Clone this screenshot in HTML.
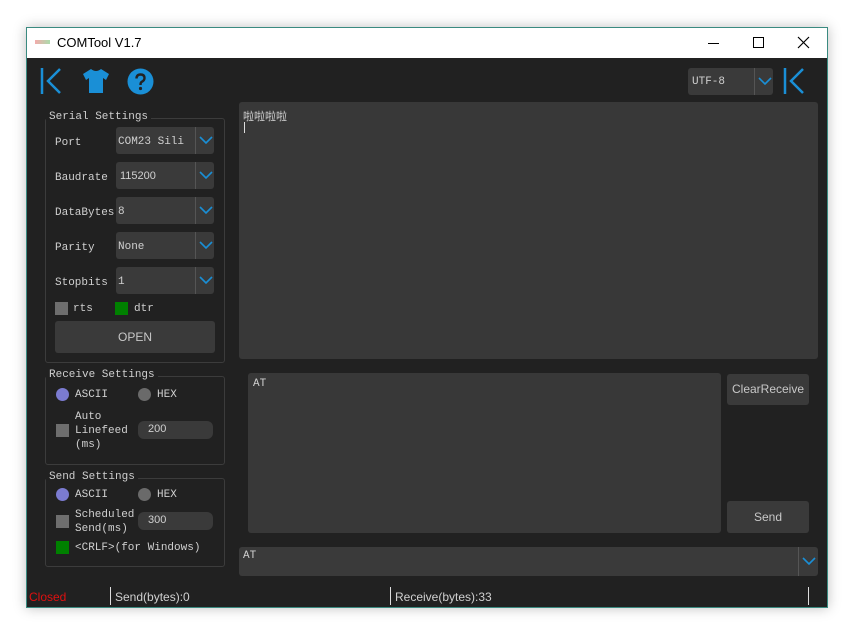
<!DOCTYPE html>
<html><head><style>
*{margin:0;padding:0;box-sizing:border-box}
body{width:862px;height:637px;background:#fff;position:relative;overflow:hidden;font-family:"Liberation Mono","Noto Sans CJK SC",monospace;font-size:11px;color:#d0d0d0}
.a{position:absolute}
.win{left:26px;top:27px;width:802px;height:581px;border:1px solid #3a8a80;background:#212121;box-shadow:0 0 12px rgba(0,0,0,.25)}
.title{left:27px;top:28px;width:800px;height:30px;background:#fff;color:#000;font-family:"Liberation Sans",sans-serif;font-size:13px}
.grp{border:1px solid #3c3c3c;border-radius:3px}
.gt{background:#212121;padding:0 3px;color:#cfcfcf;font-size:11px}
.cb{background:#3a3a3a;border-radius:3px}
.cb .arr{position:absolute;right:0;top:0;bottom:0;width:19px;border-left:1px solid #555}
.chk{width:13px;height:13px;background:#6e6e6e}
.rad{width:13px;height:13px;border-radius:50%}
.btn{background:#3a3a3a;border-radius:3px;font-family:"Liberation Sans",sans-serif;font-size:12px;color:#c8c8c8;text-align:center}
.ta{background:#383838;border-radius:3px}
.sans{font-family:"Liberation Sans",sans-serif;font-size:12px}
</style></head><body>
<div class="a win"></div>
<div class="a title">
 <div class="a" style="left:8px;top:12px;width:15px;height:4px;background:linear-gradient(90deg,#e88 0,#8c8 100%);opacity:.7"></div>
 <div class="a" style="left:30px;top:7px">COMTool V1.7</div>
 <div class="a" style="left:681px;top:15px;width:11px;height:1px;background:#000"></div>
 <div class="a" style="left:726px;top:9px;width:11px;height:11px;border:1px solid #000"></div>
 <svg class="a" style="left:770px;top:8px" width="13" height="13"><path d="M1 1L12 12M12 1L1 12" stroke="#000" stroke-width="1.2"/></svg>
</div>
<svg class="a" style="left:40px;top:67px" width="24" height="28"><path d="M2 1V27M20 2L8 14L20 26" stroke="#1a8fd6" stroke-width="2.5" fill="none"/></svg>
<svg class="a" style="left:82px;top:68px" width="28" height="26"><path d="M9 1Q14 5 19 1L27 6L24 12L21 10V25H7V10L4 12L1 6Z" fill="#1a8fd6"/></svg>
<svg class="a" style="left:127px;top:68px" width="27" height="27"><circle cx="13.5" cy="13.5" r="13" fill="#1a8fd6"/><path d="M9.5 10.5Q9.5 6.5 13.5 6.5Q17.5 6.5 17.5 10Q17.5 12.5 14.5 14Q13.5 14.7 13.5 17" stroke="#222" stroke-width="2.4" fill="none"/><circle cx="13.5" cy="20.5" r="1.6" fill="#222"/></svg>
<div class="a cb" style="left:688px;top:68px;width:85px;height:27px"><span class="a" style="left:4px;top:8px">UTF-8</span><div class="arr"><svg class="a" style="left:3px;top:9px" width="14" height="9"><path d="M1 1L7 7L13 1" stroke="#1a8fd6" stroke-width="1.6" fill="none"/></svg></div></div>
<svg class="a" style="left:783px;top:67px" width="24" height="28"><path d="M2 1V27M20 2L8 14L20 26" stroke="#1a8fd6" stroke-width="2.5" fill="none"/></svg>

<div class="a grp" style="left:45px;top:118px;width:180px;height:245px"></div>
<div class="a gt" style="left:46px;top:111px">Serial Settings</div>
<div class="a" style="left:55px;top:137px">Port</div>
<div class="a" style="left:55px;top:172px">Baudrate</div>
<div class="a" style="left:55px;top:207px">DataBytes</div>
<div class="a" style="left:55px;top:242px">Parity</div>
<div class="a" style="left:55px;top:277px">Stopbits</div>
<div class="a cb" style="left:116px;top:127px;width:98px;height:27px"><span class="a" style="left:2px;top:9px">COM23 Sili</span><div class="arr"><svg class="a" style="left:3px;top:9px" width="14" height="9"><path d="M1 1L7 7L13 1" stroke="#1a8fd6" stroke-width="1.6" fill="none"/></svg></div></div>
<div class="a cb" style="left:116px;top:162px;width:98px;height:27px"><span class="a sans" style="left:4px;top:8px;font-size:11px">115200</span><div class="arr"><svg class="a" style="left:3px;top:9px" width="14" height="9"><path d="M1 1L7 7L13 1" stroke="#1a8fd6" stroke-width="1.6" fill="none"/></svg></div></div>
<div class="a cb" style="left:116px;top:197px;width:98px;height:27px"><span class="a" style="left:2px;top:9px">8</span><div class="arr"><svg class="a" style="left:3px;top:9px" width="14" height="9"><path d="M1 1L7 7L13 1" stroke="#1a8fd6" stroke-width="1.6" fill="none"/></svg></div></div>
<div class="a cb" style="left:116px;top:232px;width:98px;height:27px"><span class="a" style="left:2px;top:9px">None</span><div class="arr"><svg class="a" style="left:3px;top:9px" width="14" height="9"><path d="M1 1L7 7L13 1" stroke="#1a8fd6" stroke-width="1.6" fill="none"/></svg></div></div>
<div class="a cb" style="left:116px;top:267px;width:98px;height:27px"><span class="a" style="left:2px;top:9px">1</span><div class="arr"><svg class="a" style="left:3px;top:9px" width="14" height="9"><path d="M1 1L7 7L13 1" stroke="#1a8fd6" stroke-width="1.6" fill="none"/></svg></div></div>
<div class="a chk" style="left:55px;top:302px"></div><div class="a" style="left:73px;top:303px">rts</div>
<div class="a chk" style="left:115px;top:302px;background:#008000"></div><div class="a" style="left:134px;top:303px">dtr</div>
<div class="a btn" style="left:55px;top:321px;width:160px;height:32px;line-height:32px">OPEN</div>

<div class="a grp" style="left:45px;top:376px;width:180px;height:89px"></div>
<div class="a gt" style="left:46px;top:369px">Receive Settings</div>
<div class="a rad" style="left:56px;top:388px;background:#7b7bd0"></div><div class="a" style="left:75px;top:389px">ASCII</div>
<div class="a rad" style="left:138px;top:388px;background:#6a6a6a"></div><div class="a" style="left:157px;top:389px">HEX</div>
<div class="a chk" style="left:56px;top:424px"></div>
<div class="a" style="left:75px;top:410px;line-height:14px">Auto<br>Linefeed<br>(ms)</div>
<div class="a cb" style="left:138px;top:421px;width:75px;height:18px;border-radius:6px"><span class="a sans" style="left:10px;top:2px;font-size:11px">200</span></div>

<div class="a grp" style="left:45px;top:478px;width:180px;height:89px"></div>
<div class="a gt" style="left:46px;top:471px">Send Settings</div>
<div class="a rad" style="left:56px;top:488px;background:#7b7bd0"></div><div class="a" style="left:75px;top:489px">ASCII</div>
<div class="a rad" style="left:138px;top:488px;background:#6a6a6a"></div><div class="a" style="left:157px;top:489px">HEX</div>
<div class="a chk" style="left:56px;top:515px"></div>
<div class="a" style="left:75px;top:508px;line-height:14px">Scheduled<br>Send(ms)</div>
<div class="a cb" style="left:138px;top:512px;width:75px;height:18px;border-radius:6px"><span class="a sans" style="left:10px;top:2px;font-size:11px">300</span></div>
<div class="a chk" style="left:56px;top:541px;background:#008000"></div><div class="a" style="left:75px;top:542px">&lt;CRLF&gt;(for Windows)</div>

<div class="a ta" style="left:239px;top:102px;width:579px;height:257px"><span class="a" style="left:4px;top:6px">啦啦啦啦</span><div class="a" style="left:5px;top:20px;width:1px;height:11px;background:#ddd"></div></div>
<div class="a ta" style="left:248px;top:373px;width:473px;height:160px"><span class="a" style="left:5px;top:5px">AT</span></div>
<div class="a btn" style="left:727px;top:374px;width:82px;height:31px;line-height:31px">ClearReceive</div>
<div class="a btn" style="left:727px;top:501px;width:82px;height:32px;line-height:32px">Send</div>
<div class="a cb" style="left:239px;top:547px;width:579px;height:29px"><span class="a" style="left:4px;top:3px">AT</span><div class="arr" style="width:20px"><svg class="a" style="left:3px;top:10px" width="14" height="9"><path d="M1 1L7 7L13 1" stroke="#1a8fd6" stroke-width="1.6" fill="none"/></svg></div></div>

<div class="a sans" style="left:29px;top:590px;color:#e01010">Closed</div>
<div class="a" style="left:110px;top:587px;width:1px;height:18px;background:#ddd"></div>
<div class="a sans" style="left:115px;top:590px">Send(bytes):0</div>
<div class="a" style="left:390px;top:587px;width:1px;height:18px;background:#ddd"></div>
<div class="a sans" style="left:395px;top:590px">Receive(bytes):33</div>
<div class="a" style="left:808px;top:587px;width:1px;height:18px;background:#ddd"></div>
</body></html>
